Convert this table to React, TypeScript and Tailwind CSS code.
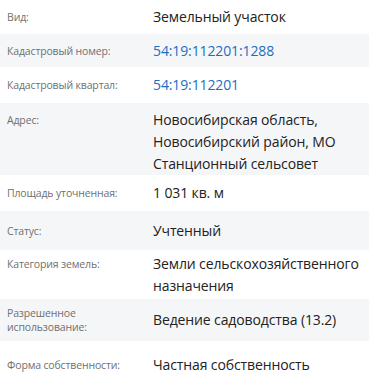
import React from 'react'

type Row = {
  label: string
  value: string
  link?: boolean
  h: string
  // rows with a wrapping value sit at the top, with their own padding
  pad?: string
}

const rows: Row[] = [
  { label: 'Вид:', value: 'Земельный участок', h: 'h-[34px]' },
  { label: 'Кадастровый номер:', value: '54:19:112201:1288', link: true, h: 'h-[33px]' },
  { label: 'Кадастровый квартал:', value: '54:19:112201', link: true, h: 'h-[36px]' },
  {
    label: 'Адрес:',
    value: 'Новосибирская область, Новосибирский район, МО Станционный сельсовет',
    h: 'h-[72px]',
    pad: 'pt-[6px]',
  },
  { label: 'Площадь уточненная:', value: '1 031 кв. м', h: 'h-[36px]' },
  { label: 'Статус:', value: 'Учтенный', h: 'h-[39px]' },
  {
    label: 'Категория земель:',
    value: 'Земли сельскохозяйственного назначения',
    h: 'h-[49px]',
    pad: 'pt-[3px]',
  },
  { label: 'Разрешенное использование:', value: 'Ведение садоводства (13.2)', h: 'h-[42px]' },
  { label: 'Форма собственности:', value: 'Частная собственность', h: 'h-[38px]', pad: 'pt-[13px]' },
]

function InfoRow({ row, odd }: { row: Row; odd: boolean }) {
  return (
    <div
      className={`flex ${row.h} ${row.pad ? `items-start ${row.pad}` : 'items-center'} ${odd ? 'bg-[#f5f6f8]' : 'bg-white'}`}
    >
      <div
        className={`w-[153px] shrink-0 pl-[7px] pr-3 text-[10.5px] leading-[14px] tracking-[-0.15px] text-[#707070] ${row.pad ? 'pt-[4px]' : ''}`}
      >
        {row.label}
      </div>
      <div
        className={`flex-1 text-[14px] leading-[22px] tracking-[-0.12px] ${row.link ? 'text-[#1b6ec2]' : 'text-[#222]'}`}
      >
        {row.value}
      </div>
    </div>
  )
}

export default function App() {
  return (
    <div className="w-[369px] h-[379px] overflow-hidden bg-white font-['Open_Sans',sans-serif]">
      {rows.map((row, i) => (
        <InfoRow key={row.label} row={row} odd={i % 2 === 1} />
      ))}
    </div>
  )
}
